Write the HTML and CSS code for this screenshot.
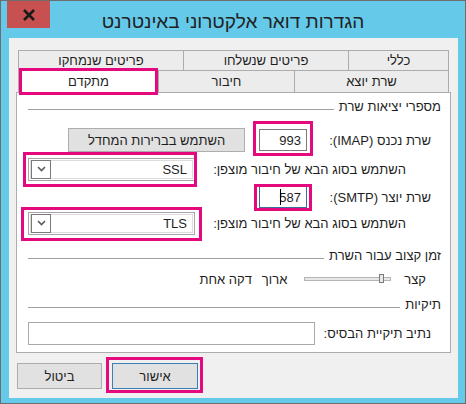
FILE: index.html
```html
<!DOCTYPE html>
<html lang="he" dir="rtl">
  <head>
    <meta charset="utf-8" />
    <title>הגדרות דואר אלקטרוני באינטרנט</title>
    <link rel="stylesheet" href="styles.css">
  </head>

  <body>
    <div class="window">
      <div class="titlebar">
        <span class="title">הגדרות דואר אלקטרוני באינטרנט</span>
        <span class="close">
          <svg width="14" height="12" viewBox="0 0 14 12">
            <path d="M2 1 L12 11 M12 1 L2 11" stroke="#1a1a1a" stroke-width="2.6" fill="none" />
          </svg>
        </span>
      </div>

      <div class="client">
        <div class="tabs">
          <div class="tab-row">
            <div class="tab tab-general">כללי</div>
            <div class="tab tab-sent">פריטים שנשלחו</div>
            <div class="tab tab-deleted">פריטים שנמחקו</div>
          </div>
          <div class="tab-row front">
            <div class="tab tab-outgoing">שרת יוצא</div>
            <div class="tab tab-conn">חיבור</div>
            <div class="tab tab-advanced active hl">מתקדם</div>
          </div>
        </div>

        <div class="panel">
          <div class="group-title"><span>מספרי יציאות שרת</span><i class="rule"></i></div>

          <div class="row row-imap">
            <label class="port-label">שרת נכנס (IMAP):</label>
            <span class="field port hl hl-imap">993</span>
            <span class="btn btn-defaults">השתמש בברירות המחדל</span>
          </div>

          <div class="row row-enc">
            <label>השתמש בסוג הבא של חיבור מוצפן:</label>
            <span class="select hl hl-ssl"><span>SSL</span><span class="drop"><svg width="9" height="6" viewBox="0 0 9 6"><path d="M1 1 L4.5 4.5 L8 1" stroke="#5a5a5a" stroke-width="1.6" fill="none" /></svg></span></span>
          </div>

          <div class="row row-smtp">
            <label class="port-label">שרת יוצר (SMTP):</label>
            <span class="field port focused hl hl-smtp">587<i class="caret"></i></span>
          </div>

          <div class="row row-enc second">
            <label>השתמש בסוג הבא של חיבור מוצפן:</label>
            <span class="select hl hl-tls"><span>TLS</span><span class="drop"><svg width="9" height="6" viewBox="0 0 9 6"><path d="M1 1 L4.5 4.5 L8 1" stroke="#5a5a5a" stroke-width="1.6" fill="none" /></svg></span></span>
          </div>

          <div class="group-title gap-timeout"><span>זמן קצוב עבור השרת</span><i class="rule"></i></div>

          <div class="row row-timeout">
            <span>קצר</span>
            <span class="slider"><i class="thumb"></i></span>
            <span class="long">ארוך</span>
            <span>דקה אחת</span>
          </div>

          <div class="group-title gap-folders"><span>תיקיות</span><i class="rule"></i></div>

          <div class="row row-root">
            <label>נתיב תיקיית הבסיס:</label>
            <span class="field root"></span>
          </div>
        </div>

        <div class="buttons">
          <span class="btn btn-ok hl hl-ok">אישור</span>
          <span class="btn btn-cancel">ביטול</span>
        </div>
      </div>
    </div>
  </body>
</html>
```

FILE: styles.css
```css
* {
  box-sizing: border-box;
}

html,
body {
  margin: 0;
}

body {
  width: 466px;
  height: 404px;
  font-family: "Liberation Sans", Arial, sans-serif;
  font-size: 13px;
  color: #1e1e1e;
}

.window {
  height: 404px;
  border: 1px solid #6d6d6d;
  background: #65c9ea;
  display: flex;
  flex-direction: column;
}

/* title bar */
.titlebar {
  height: 37px;
  flex: none;
  display: grid;
  grid-template-columns: 1fr auto 1fr;
}
.title {
  grid-column: 2;
  align-self: center;
  padding-top: 4px;
  font-size: 19px;
  color: #222;
}
.close {
  grid-column: 3;
  justify-self: end;
  margin-left: 6px;
  width: 43px;
  height: 27px;
  background: #c75050;
  display: flex;
  align-items: center;
  justify-content: center;
}

/* dialog body */
.client {
  flex: 1;
  margin: 0 7px 5px 8px;
  padding: 12px 7px 0;
  background: #f0f0f0;
}

.tabs {
  margin: 0 2px;
}
.tab-row {
  display: flex;
  height: 20px;
}
.tab-row.front {
  height: 22px;
}
.tab {
  border-top: 1px solid #acacac;
  border-left: 1px solid #acacac;
  background: #ececec;
  text-align: center;
  line-height: 19px;
}
.front .tab {
  line-height: 21px;
}
.tab-general,
.tab-outgoing {
  border-right: 1px solid #acacac;
}
.tab-general { width: 101px; }
.tab-sent { width: 165px; }
.tab-deleted { width: 165px; }
.tab-outgoing { width: 155px; }
.tab-conn { width: 136px; }
.tab-advanced { width: 140px; }

.tab.active {
  background: #fff;
  height: 23px;
  z-index: 1;
}

.panel {
  height: 261px;
  border: 1px solid #acacac;
  background: #fff;
  padding: 5px 9px 0 11px;
}

.group-title {
  display: flex;
  align-items: center;
  gap: 5px;
  height: 16px;
}
.rule {
  flex: 1;
  height: 1px;
  margin-top: 6px;
  background: #a0a0a0;
}
.gap-timeout { margin-top: 12px; }
.gap-folders { margin-top: 9px; }

.row {
  display: flex;
  align-items: center;
  height: 24px;
  padding-right: 10px;
}
.row-imap {
  height: 26px;
  margin-top: 13px;
}
.row-enc {
  margin-top: 4px;
  padding-right: 35px;
  justify-content: space-between;
}
.row-enc.second {
  margin-top: 2px;
}
.row-smtp {
  margin-top: 4px;
}
.row-timeout {
  height: 16px;
  margin-top: 8px;
  padding-right: 15px;
}
.row-root {
  margin-top: 9px;
  justify-content: space-between;
}

.port-label {
  width: 124px;
  flex: none;
}

.field {
  display: flex;
  align-items: center;
  justify-content: flex-start;
  height: 22px;
  border: 1px solid #7a7a7a;
  background: #fff;
  padding: 0 5px;
}
.port {
  width: 48px;
}
.port.focused {
  border-color: #3c6e9c;
}
.caret {
  width: 1px;
  height: 16px;
  background: #000;
  margin-right: -2px;
}
.root {
  width: 287px;
  height: 23px;
  border-color: #a9a9a9;
}

.btn {
  display: flex;
  align-items: center;
  justify-content: center;
  height: 24px;
  background: #e1e1e1;
  border: 1px solid #adadad;
}
.btn-defaults {
  width: 177px;
  margin-right: 14px;
}

.select {
  display: flex;
  align-items: center;
  justify-content: space-between;
  width: 167px;
  height: 23px;
  border: 1px solid #a6a6a6;
  box-shadow: inset 0 0 0 1px #fff, inset 0 0 0 2px #dcdcdc;
  background: #fff;
  padding: 0 7px 0 2px;
}
.drop {
  width: 20px;
  height: 19px;
  border: 1px solid #7a7a7a;
  display: flex;
  align-items: center;
  justify-content: center;
}

.slider {
  position: relative;
  width: 87px;
  height: 4px;
  margin-right: 13px;
  border: 1px solid #b4b4b4;
  background: #e7e7e7;
}
.thumb {
  position: absolute;
  left: 74px;
  top: -4px;
  width: 5px;
  height: 9px;
  border: 1px solid #7b7b7b;
  background: #e9e9e9;
}
.long {
  margin: 0 17px 0 10px;
}

.buttons {
  display: flex;
  justify-content: flex-end;
  gap: 10px;
  margin-top: 10px;
  padding-left: 1px;
}
.btn-ok,
.btn-cancel {
  height: 26px;
}
.btn-ok {
  width: 86px;
  border-color: #3c7fb1;
}
.btn-cancel {
  width: 85px;
}

/* pink call-out boxes drawn over the controls */
.hl {
  position: relative;
}
.hl::after {
  content: "";
  position: absolute;
  border: 3px solid #e5097f;
  pointer-events: none;
}
.tab.hl::after { top: -3px; bottom: -2px; left: 0; right: 0; }
.hl-imap::after { top: -9px; bottom: -6px; left: -7px; right: -7px; }
.hl-ssl::after { top: -7px; bottom: -7px; left: -6px; right: -3px; }
.hl-smtp::after { top: -3px; bottom: -4px; left: -6px; right: -6px; }
.hl-tls::after { top: -6px; bottom: -7px; left: -8px; right: -8px; }
.hl-ok::after { top: -7px; bottom: -5px; left: -7px; right: -6px; }
```
